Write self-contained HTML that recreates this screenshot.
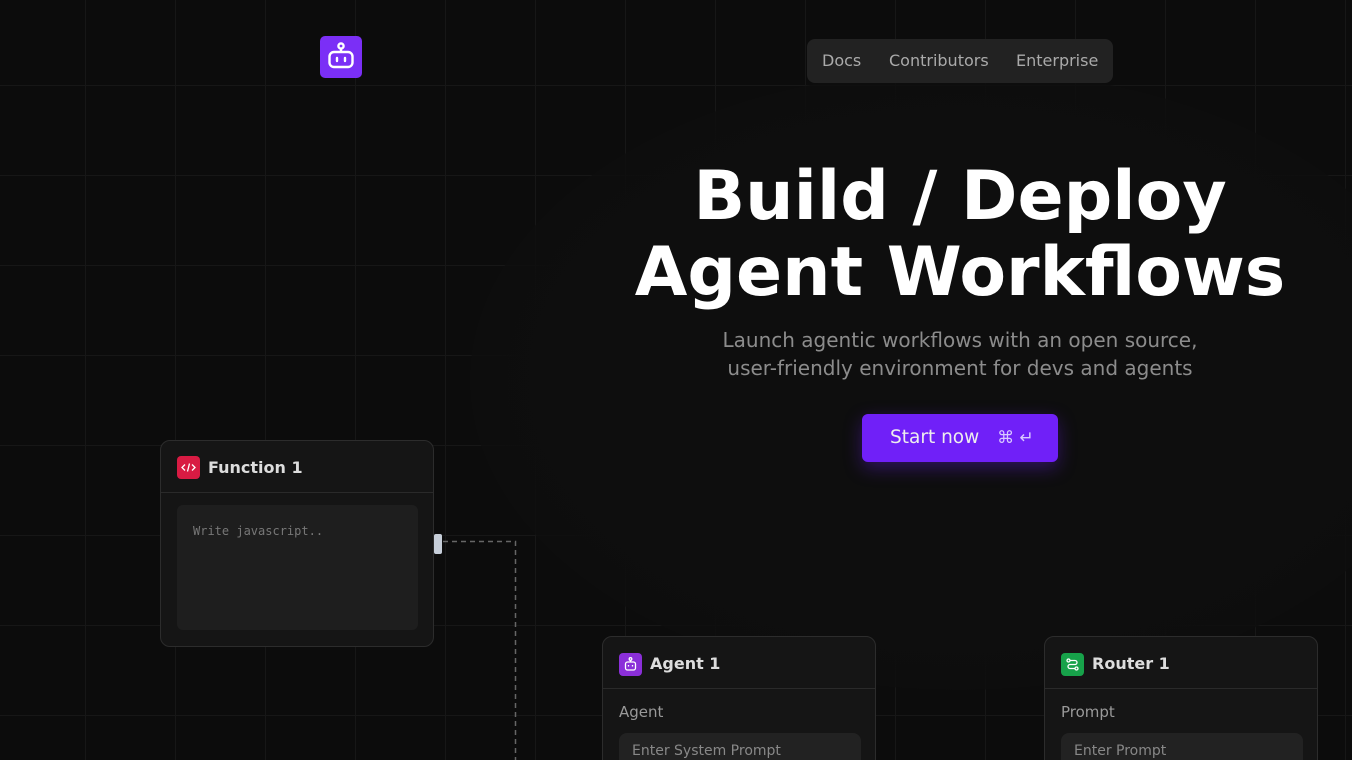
<!DOCTYPE html>
<html style="width:1352px;height:760px;overflow:hidden"><head><style>
*{margin:0;padding:0;box-sizing:border-box}
body{width:1352px;height:760px;overflow:hidden;background:#0c0c0c;font-family:"DejaVu Sans","Liberation Sans",sans-serif;position:relative}
.grid{position:absolute;inset:0;background-image:linear-gradient(to right,#171717 1px,transparent 1px),linear-gradient(to bottom,#171717 1px,transparent 1px);background-size:90px 90px;background-position:85px 85px}
.vig{position:absolute;left:470px;top:70px;width:980px;height:620px;border-radius:50%;background:radial-gradient(ellipse at center,#0e0e0e 55%,rgba(13,13,13,0.8) 72%,rgba(13,13,13,0) 100%)}
.logo{position:absolute;left:320px;top:36px;width:42px;height:42px;background:#7b2ff6;border-radius:5px}
.nav{position:absolute;left:807px;top:39px;width:306px;height:44px;background:#222;border-radius:8px;color:#aaa;font-size:16px}
.nav span{position:absolute;top:12px}
h1{position:absolute;left:560px;width:800px;top:159px;text-align:center;color:#fff;font-size:68px;line-height:76px;font-weight:bold}
.sub{position:absolute;left:560px;width:800px;top:326px;text-align:center;color:#8c8c8c;font-size:20px;line-height:28px}
.btn{position:absolute;left:862px;top:414px;width:196px;height:48px;background:#7020f8;border-radius:6px;color:#eee;font-size:18.5px;line-height:48px;padding-left:28px;box-shadow:0 6px 18px rgba(112,32,248,0.35)}
.btn i{font-style:normal;font-size:17px;margin-left:12px;color:#d8c8ff}
.card{position:absolute;width:274px;background:#151515;border:1px solid #2c2c2c;border-radius:10px;overflow:hidden}
.hd{height:52px;border-bottom:1px solid #2a2a2a;position:relative}
.ic{position:absolute;left:16px;top:16px;width:23px;height:23px;border-radius:4px}
.tt{position:absolute;left:47px;top:17px;color:#ddd;font-size:16px;font-weight:bold}
.lbl{position:absolute;left:16px;top:66px;color:#999;font-size:15px}
.inp{position:absolute;left:16px;top:96px;width:242px;height:60px;background:#222;border-radius:8px;color:#888;font-size:14px;padding:10px 13px}
</style></head><body>
<div class="grid"></div>
<div class="vig"></div>
<div class="logo"><svg width="42" height="42" viewBox="0 0 42 42" fill="none" stroke="#fff" stroke-width="2.4"><circle cx="21" cy="10" r="2.6"/><line x1="21" y1="12.6" x2="21" y2="16"/><rect x="9.5" y="16" width="23" height="15" rx="4.5"/><line x1="17" y1="22" x2="17" y2="25" stroke-linecap="round"/><line x1="25" y1="22" x2="25" y2="25" stroke-linecap="round"/></svg></div>
<div class="nav"><span style="left:15px">Docs</span><span style="left:82px">Contributors</span><span style="left:209px">Enterprise</span></div>
<h1>Build / Deploy<br>Agent Workflows</h1>
<div class="sub">Launch agentic workflows with an open source,<br>user-friendly environment for devs and agents</div>
<div class="btn">Start now <i>⌘ ↵</i></div>

<div class="card" style="left:160px;top:440px;height:207px">
<div class="hd"><div class="ic" style="background:#d81b43;top:15px"><svg width="23" height="23" viewBox="0 0 23 23" fill="none" stroke="#fff" stroke-width="1.3"><path d="M8 8.5 5 11.5 8 14.5M15 8.5 18 11.5 15 14.5M12.5 7.5 10.5 15.5"/></svg></div><div class="tt" style="top:17px">Function 1</div></div>
<div style="position:absolute;left:16px;top:64px;width:241px;height:125px;background:#1e1e1e;border-radius:6px;color:#777;font-family:'DejaVu Sans Mono','Liberation Mono',monospace;font-size:12px;padding:19px 16px">Write javascript..</div>
</div>
<div style="position:absolute;left:434px;top:534px;width:8px;height:20px;background:#c6ced9;border-radius:2px"></div>
<svg style="position:absolute;left:0;top:0" width="1352" height="760"><path d="M443 541.5H515.5V760" fill="none" stroke="#666" stroke-width="1.5" stroke-dasharray="5 4"/></svg>

<div class="card" style="left:602px;top:636px;height:140px">
<div class="hd"><div class="ic" style="background:#8b2fd9"><svg width="23" height="23" viewBox="0 0 23 23" fill="none" stroke="#fff" stroke-width="1.3"><circle cx="11.5" cy="6" r="1.3"/><line x1="11.5" y1="7.3" x2="11.5" y2="9"/><rect x="6.5" y="9" width="10" height="8" rx="2"/><line x1="9.5" y1="12" x2="9.5" y2="13.5"/><line x1="13.5" y1="12" x2="13.5" y2="13.5"/></svg></div><div class="tt">Agent 1</div></div>
<div class="lbl">Agent</div><div class="inp">Enter System Prompt</div>
</div>
<div class="card" style="left:1044px;top:636px;height:140px">
<div class="hd"><div class="ic" style="background:#17a24a"><svg width="23" height="23" viewBox="0 0 23 23" fill="none" stroke="#fff" stroke-width="1.3"><circle cx="7.5" cy="7.5" r="1.5"/><circle cx="15.5" cy="15.5" r="1.5"/><path d="M9 7.5H14a2 2 0 0 1 0 4H9a2 2 0 0 0 0 4H14"/></svg></div><div class="tt">Router 1</div></div>
<div class="lbl">Prompt</div><div class="inp">Enter Prompt</div>
</div>
</body></html>
